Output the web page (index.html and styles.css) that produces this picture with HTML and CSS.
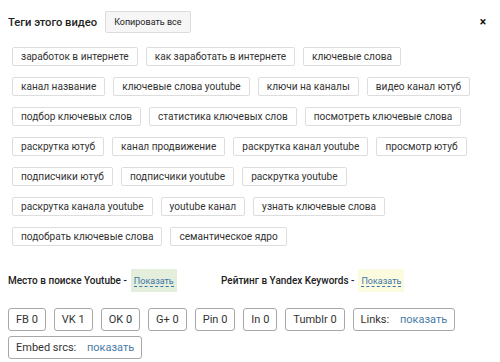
FILE: index.html
```html
<!DOCTYPE html>
<html lang="ru">
<head>
    <meta charset="UTF-8">
    <title>Теги видео</title>
    <link rel="stylesheet" href="styles.css">
</head>
<body>
    <div class="panel">
        <div class="header">
            <span class="title">Теги этого видео</span>
            <button class="copy-btn">Копировать все</button>
            <span class="close">&times;</span>
        </div>

        <div class="tags">
            <span class="tag">заработок в интернете</span>
            <span class="tag">как заработать в интернете</span>
            <span class="tag">ключевые слова</span>
            <span class="tag">канал название</span>
            <span class="tag">ключевые слова youtube</span>
            <span class="tag">ключи на каналы</span>
            <span class="tag">видео канал ютуб</span>
            <span class="tag">подбор ключевых слов</span>
            <span class="tag">статистика ключевых слов</span>
            <span class="tag">посмотреть ключевые слова</span>
            <span class="tag">раскрутка ютуб</span>
            <span class="tag">канал продвижение</span>
            <span class="tag">раскрутка канал youtube</span>
            <span class="tag">просмотр ютуб</span>
            <span class="tag">подписчики ютуб</span>
            <span class="tag">подписчики youtube</span>
            <span class="tag">раскрутка youtube</span>
            <span class="tag">раскрутка канала youtube</span>
            <span class="tag">youtube канал</span>
            <span class="tag">узнать ключевые слова</span>
            <span class="tag">подобрать ключевые слова</span>
            <span class="tag">семантическое ядро</span>
        </div>

        <div class="ranks">
            <div class="rank">
                Место в поиске Youtube -
                <span class="show green"><a class="dash-link">Показать</a></span>
            </div>
            <div class="rank">
                Рейтинг в Yandex Keywords -
                <span class="show yellow"><a class="dash-link">Показать</a></span>
            </div>
        </div>

        <div class="shares">
            <span class="share">FB 0</span>
            <span class="share">VK 1</span>
            <span class="share">OK 0</span>
            <span class="share">G+ 0</span>
            <span class="share">Pin 0</span>
            <span class="share">In 0</span>
            <span class="share">Tumblr 0</span>
            <span class="share">Links: <a class="more">показать</a></span>
            <span class="share">Embed srcs: <a class="more">показать</a></span>
        </div>
    </div>
</body>
</html>
```
FILE: styles.css
```css
* {
    margin: 0;
    padding: 0;
    box-sizing: border-box;
}

body {
    background-color: #ffffff;
    font-family: Roboto, "Noto Sans", Arial, sans-serif;
    color: #333333;
}

.panel {
    width: 500px;
    padding: 11px 8px 0 8px;
}

.header {
    display: flex;
    align-items: center;
    height: 22px;
}

.title {
    font-size: 11.2px;
    font-weight: 500;
    color: #222222;
}

.copy-btn {
    margin-left: 8px;
    height: 22px;
    padding: 0 8px;
    font-family: Roboto, Arial, sans-serif;
    font-size: 9px;
    color: #222222;
    background-color: #f6f6f6;
    border: 1px solid #dcdcdc;
    border-radius: 2px;
}

.close {
    margin-left: auto;
    margin-right: 6px;
    font-size: 12px;
    font-weight: bold;
    color: #111111;
}

.tags {
    display: flex;
    flex-wrap: wrap;
    gap: 11px 8px;
    width: 472px;
    padding: 14px 0 0 4px;
}

.tag {
    height: 19px;
    line-height: 17px;
    padding: 0 8px;
    font-size: 10.1px;
    color: #333333;
    border: 1px solid #dddddd;
    border-radius: 2px;
    white-space: nowrap;
}

.ranks {
    display: flex;
    align-items: center;
    margin-top: 23px;
    font-size: 10px;
    font-weight: 500;
    color: #222222;
}

.rank {
    display: flex;
    align-items: center;
    gap: 4px;
    width: 213px;
}

.show {
    padding: 6px 3px;
}

.show.green {
    background-color: #e3eedc;
}

.show.yellow {
    background-color: #fbfbe0;
}

.dash-link {
    font-size: 9px;
    font-weight: normal;
    color: #3c74a6;
    border-bottom: 1px dashed #3c74a6;
}

.shares {
    display: flex;
    flex-wrap: wrap;
    gap: 5px 8px;
    margin-top: 16px;
}

.share {
    height: 23px;
    line-height: 21px;
    padding: 0 7px;
    font-size: 11px;
    color: #333333;
    border: 1px solid #a8a8a8;
    border-radius: 3px;
}

.more {
    margin-left: 8px;
    color: #4a7ba6;
}
```
